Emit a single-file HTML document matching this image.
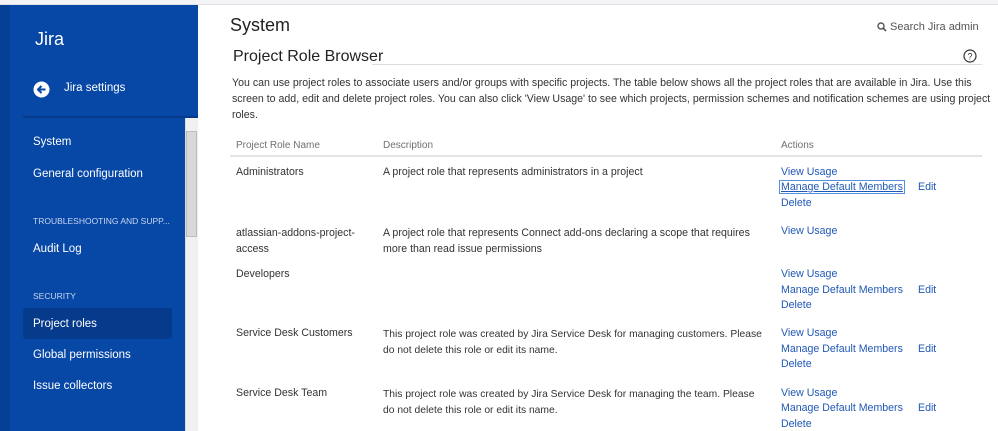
<!DOCTYPE html>
<html><head><meta charset="utf-8"><style>
*{margin:0;padding:0;box-sizing:border-box}
body{width:998px;height:431px;overflow:hidden;background:#fff;font-family:"Liberation Sans",sans-serif;font-size:10.6px;color:#333;position:relative}
.a{position:absolute;white-space:nowrap}
#top{position:absolute;left:0;top:0;width:998px;height:5px;background:#f4f4f6;border-bottom:1px solid #e2e2e6}
#sb{position:absolute;left:0;top:5px;width:198px;height:426px;background:#0747a6}
#sb .dk{position:absolute;left:0;top:0;width:10px;height:426px;background:#063f96}
.w{color:#fff;font-size:11.5px}
.l{color:#2058b5}
.g{color:#707070}
</style></head><body>
<div id="top"></div>
<div id="sb">
<div class="dk"></div>
<div class="a w" style="left:35px;top:24px;font-size:18px">Jira</div>
<svg class="a" style="left:33px;top:76px" width="17" height="17" viewBox="0 0 17 17"><circle cx="8.5" cy="8.5" r="8" fill="#fff"/><path d="M12.5 8.5H5.5M8.5 5L5 8.5 8.5 12" stroke="#0747a6" stroke-width="2" fill="none"/></svg>
<div class="a w" style="left:64px;top:77px">Jira settings</div>
<div class="a" style="left:23px;top:111px;width:175px;height:2px;background:#053a8a"></div>
<div class="a" style="left:185px;top:113px;width:13px;height:313px;background:#f0f0f0;border-left:1px solid #ddd"></div>
<div class="a" style="left:186px;top:126px;width:11px;height:106px;background:#d8d8d8;border:1px solid #bbb"></div>
<div class="a w" style="left:33px;top:131px">System</div>
<div class="a w" style="left:33px;top:163px">General configuration</div>
<div class="a" style="left:33px;top:211px;font-size:8.5px;color:#c8d6f0">TROUBLESHOOTING AND SUPP...</div>
<div class="a w" style="left:33px;top:238px">Audit Log</div>
<div class="a" style="left:33px;top:286px;font-size:8.5px;color:#c8d6f0">SECURITY</div>
<div class="a" style="left:23px;top:303px;width:149px;height:31px;background:#063a8a;border-radius:3px"></div>
<div class="a w" style="left:33px;top:313px">Project roles</div>
<div class="a w" style="left:33px;top:344px">Global permissions</div>
<div class="a w" style="left:33px;top:375px">Issue collectors</div>
</div>

<div class="a" style="left:230px;top:15px;font-size:18px;color:#222">System</div>
<svg class="a" style="left:877px;top:22px" width="10" height="10"><circle cx="4" cy="4" r="3" stroke="#555" stroke-width="1.4" fill="#fff"/><path d="M6 6l3 3" stroke="#555" stroke-width="1.6"/></svg>
<div class="a" style="left:890px;top:21px;font-size:11px;color:#555">Search Jira admin</div>
<div class="a" style="left:233px;top:48px;font-size:16px;color:#222">Project Role Browser</div>
<div class="a" style="left:372px;top:64px;width:610px;height:1px;background:#ddd"></div>
<svg class="a" style="left:963px;top:49px" width="14" height="14"><circle cx="7" cy="7" r="6" stroke="#333" stroke-width="1.2" fill="none"/><text x="7" y="10.5" font-size="9" text-anchor="middle" fill="#333" font-family="Liberation Sans">?</text></svg>
<div class="a" style="left:232px;top:75px;line-height:16px;font-size:10.6px">You can use project roles to associate users and/or groups with specific projects. The table below shows all the project roles that are available in Jira. Use this<br>screen to add, edit and delete project roles. You can also click 'View Usage' to see which projects, permission schemes and notification schemes are using project<br>roles.</div>

<div class="a g" style="left:236px;top:140px;font-size:10px">Project Role Name</div>
<div class="a g" style="left:383px;top:140px;font-size:10px">Description</div>
<div class="a g" style="left:781px;top:140px;font-size:10px">Actions</div>
<div class="a" style="left:230px;top:155px;width:752px;height:2px;background:#e4e4e8"></div>

<div class="a" style="left:236px;top:166px">Administrators</div>
<div class="a" style="left:383px;top:166px">A project role that represents administrators in a project</div>
<div class="a l" style="left:781px;top:166px">View Usage</div>
<div class="a l" style="left:780px;top:181px;text-decoration:underline;outline:1px solid #5590e0;padding:0 1px">Manage Default Members</div>
<div class="a l" style="left:918px;top:181px">Edit</div>
<div class="a l" style="left:781px;top:197px">Delete</div>

<div class="a" style="left:236px;top:225px;line-height:16px">atlassian-addons-project-<br>access</div>
<div class="a" style="left:383px;top:225px;line-height:16px">A project role that represents Connect add-ons declaring a scope that requires<br>more than read issue permissions</div>
<div class="a l" style="left:781px;top:225px">View Usage</div>

<div class="a" style="left:236px;top:268px">Developers</div>
<div class="a l" style="left:781px;top:268px">View Usage</div>
<div class="a l" style="left:781px;top:284px">Manage Default Members</div>
<div class="a l" style="left:918px;top:284px">Edit</div>
<div class="a l" style="left:781px;top:299px">Delete</div>

<div class="a" style="left:236px;top:327px">Service Desk Customers</div>
<div class="a" style="left:383px;top:327px;line-height:16px;font-size:10.3px">This project role was created by Jira Service Desk for managing customers. Please<br>do not delete this role or edit its name.</div>
<div class="a l" style="left:781px;top:327px">View Usage</div>
<div class="a l" style="left:781px;top:343px">Manage Default Members</div>
<div class="a l" style="left:918px;top:343px">Edit</div>
<div class="a l" style="left:781px;top:358px">Delete</div>

<div class="a" style="left:236px;top:387px">Service Desk Team</div>
<div class="a" style="left:383px;top:387px;line-height:16px;font-size:10.3px">This project role was created by Jira Service Desk for managing the team. Please<br>do not delete this role or edit its name.</div>
<div class="a l" style="left:781px;top:387px">View Usage</div>
<div class="a l" style="left:781px;top:402px">Manage Default Members</div>
<div class="a l" style="left:918px;top:402px">Edit</div>
<div class="a l" style="left:781px;top:418px">Delete</div>
</body></html>
